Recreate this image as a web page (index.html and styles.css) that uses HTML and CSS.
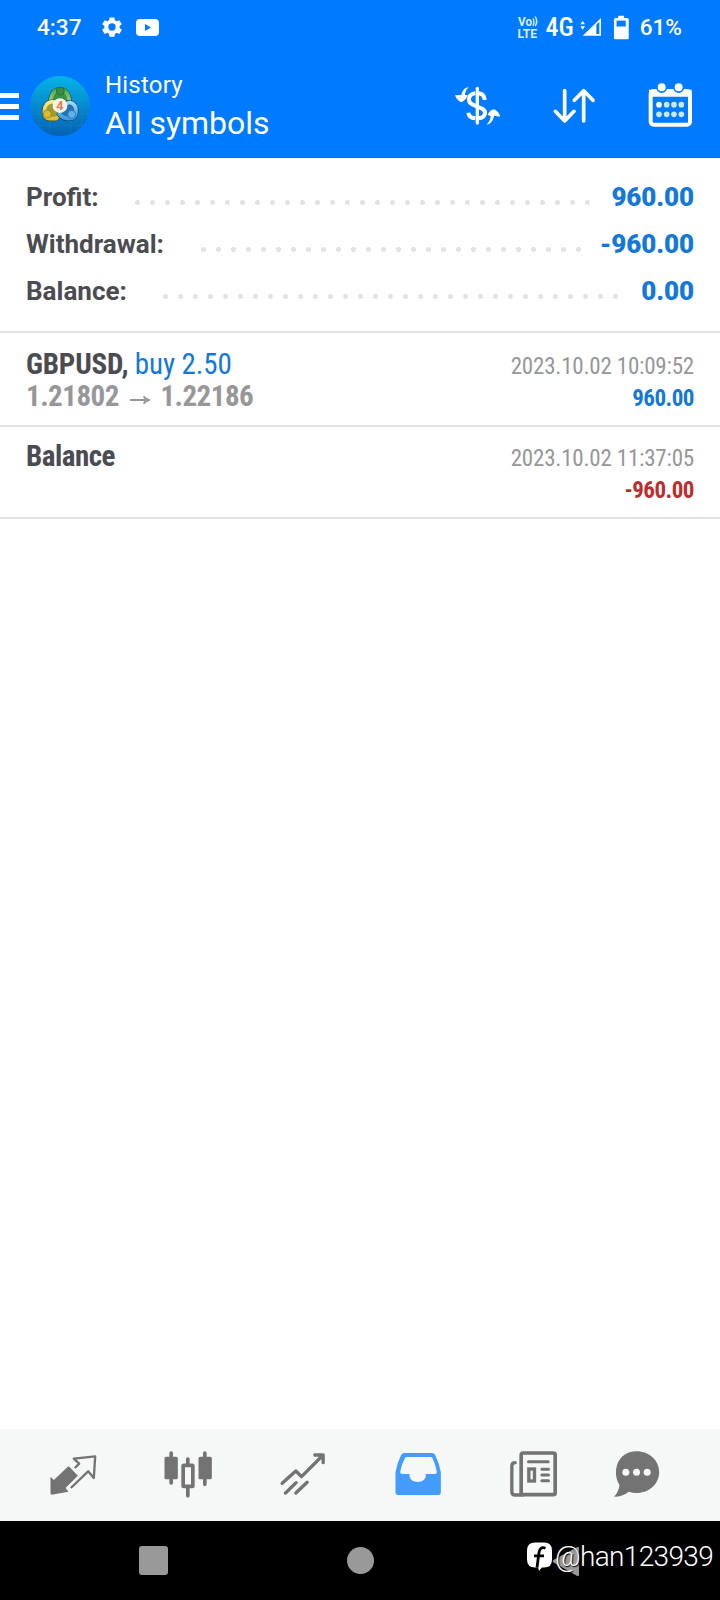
FILE: index.html
```
<!DOCTYPE html>
<html lang="en">
<head>
<meta charset="utf-8">
<title>History</title>
<link rel="stylesheet" href="styles.css">
</head>
<body>
<div class="screen">
  <header class="header">
    <div class="status">
      <span class="clock">4:37</span>
      <svg class="gear" viewBox="0 0 24 24"><path fill="#fff" fill-rule="evenodd" d="M9.3 1.5h5.4l.5 3 1.9 1.1 2.9-1.1 2.7 4.6-2.4 1.9v2l2.4 1.9-2.7 4.6-2.9-1.1-1.9 1.1-.5 3H9.3l-.5-3-1.9-1.1L4 19.500l-2.700-4.600 2.400-1.900v-2L1.300 9.100 4 4.500l2.900 1.100 1.900-1.100zM12 8a4 4 0 1 0 0 8 4 4 0 0 0 0-8z"/></svg>
      <svg class="tube" viewBox="0 0 23 17"><rect width="23" height="17" rx="4" fill="#fff"/><path d="M9 5v7l6-3.500z" fill="#007aff"/></svg>
      <span class="spacer"></span>
      <svg class="volte" viewBox="-2 -4 26 32"><text x="1" y="11" textLength="14" lengthAdjust="spacingAndGlyphs">Vo</text><text x="0.500" y="22.500" textLength="19.500" lengthAdjust="spacingAndGlyphs">LTE</text><path d="M16 3.500q2 3.500 0 7.500M18.200 1.500q3 5 0 9.500" fill="none" stroke="#d9efff" stroke-width="1.400"/></svg>
      <span class="net">4G</span>
      <svg class="signal" viewBox="660 50 66 60"><path d="M661 72l7-10 7 10zM661 78l7 10 7-10zM668 106l55-53v53z" fill="#fff"/><path d="M709 73v28h9V64z" fill="#007aff"/></svg>
      <svg class="battery" viewBox="760 40 50 76"><path d="M775 42h18v7h9q5 0 5 5v56q0 4-4 4h-37q-4 0-4-4V54q0-5 5-5h8z" fill="#fff"/><path d="M770 57h28v18h-28z" fill="#007aff"/></svg>
      <span class="percent">61%</span>
    </div>
    <div class="appbar">
      <div class="menu"><i></i><i></i><i></i></div>
      <svg class="logo" viewBox="90 226 180 180">
        <defs>
          <linearGradient id="sky" x1="0" y1="0" x2="0" y2="1"><stop offset="0" stop-color="#04b4e6"/><stop offset=".5" stop-color="#0689cf"/><stop offset="1" stop-color="#0561b0"/></linearGradient>
          <linearGradient id="green" x1="0" y1="0" x2="0" y2="1"><stop offset="0" stop-color="#4fa850"/><stop offset="1" stop-color="#b5e08c"/></linearGradient>
          <linearGradient id="gold" x1="0" y1="0" x2="0" y2="1"><stop offset="0" stop-color="#f3ea92"/><stop offset="1" stop-color="#d9bf3c"/></linearGradient>
          <linearGradient id="aqua" x1="0" y1="0" x2="0" y2="1"><stop offset="0" stop-color="#a3d9f5"/><stop offset="1" stop-color="#3f9be2"/></linearGradient>
        </defs>
        <circle cx="180" cy="316" r="90" fill="url(#sky)"/>
        <path d="M115 254v125M149 232v168M212 232v168M245 256v120M104 263h152M92 296h176M92 340h176M108 375h144" stroke="#48c3e5" stroke-opacity=".16" stroke-width="2"/>
        <g stroke-linejoin="round">
          <path d="M180 267c20 0 26 14 28 34l-4 14h-48l-4-14c2-20 8-34 28-34z" fill="#3c9149" stroke="#174f42" stroke-width="15"/>
          <path d="M180 267c20 0 26 14 28 34l-4 14h-48l-4-14c2-20 8-34 28-34z" fill="#3c9149" stroke="url(#green)" stroke-width="11"/>
          <path d="M160 303c-18 0-27 13-27 30 0 14 5 21 17 21h18l14-14-8-30z" fill="#a39a2c" stroke="#324e3c" stroke-width="15"/>
          <path d="M160 303c-18 0-27 13-27 30 0 14 5 21 17 21h18l14-14-8-30z" fill="#a39a2c" stroke="url(#gold)" stroke-width="11"/>
          <path d="M208 305c16 4 22 14 20 30-1 14-9 19-21 19-13 0-22-5-30-14l14-28z" fill="#2374b5" stroke="#103f6c" stroke-width="15"/>
          <path d="M208 305c16 4 22 14 20 30-1 14-9 19-21 19-13 0-22-5-30-14l14-28z" fill="#2374b5" stroke="url(#aqua)" stroke-width="11"/>
        </g>
        <circle cx="181" cy="271" r="12" fill="#358f3f" stroke="#1b6133" stroke-width="2"/>
        <circle cx="142" cy="340" r="12" fill="#dbbb32" stroke="#8b761b" stroke-width="2"/>
        <circle cx="215" cy="341" r="12" fill="#5db4ea" stroke="#1b6096" stroke-width="2"/>
        <circle cx="180" cy="315" r="22" fill="#f6f3ee"/>
        <text class="logo-num" x="180" y="328" text-anchor="middle">4</text>
      </svg>
      <div class="titles"><div class="sub">History</div><div class="main">All symbols</div></div>
      <svg class="act" viewBox="270 230 168 168" fill="none" stroke="#fff">
        <path d="M352 264v104" stroke-width="10" stroke-linecap="round"/>
        <path d="M374 299q-1-19-19-20M346 279c-22 2-25 25-9 33l31 14c14 9 6 28-13 28M346 354q-19-1-21-17" stroke-width="12"/>
        <path d="M326 261q-17 0-22 23l-19 1q4 14 19 21 14-6 19-21l-8-1q0-12 11-23zM380 373q18-3 22-27l18 3q-2-14-17-22-15 2-20 17l9 3q0 13-12 26z" fill="#fff" stroke="none"/>
      </svg>
      <svg class="act second" viewBox="562 230 168 168" fill="none" stroke="#fff" stroke-width="11" stroke-linecap="round" stroke-linejoin="round"><path d="M615 271v90M587 333l28 29 28-29M672 362v-90M644 300l28-29 28 29"/></svg>
      <svg class="act third" viewBox="850 230 168 168">
        <rect x="873" y="272" width="118" height="101" rx="9" fill="none" stroke="#fff" stroke-width="12"/>
        <path d="M868 268h128v21H868z" fill="#fff"/>
        <g fill="#fff" stroke="#007aff" stroke-width="5"><circle cx="906" cy="261" r="14.500"/><circle cx="957" cy="261" r="14.500"/></g>
        <g fill="#c9e7ff"><circle cx="898" cy="313" r="8.500" fill="#fff"/><circle cx="921" cy="313" r="8.500"/><circle cx="943" cy="313" r="8.500"/><circle cx="965" cy="313" r="8.500"/><circle cx="898" cy="342" r="8.500"/><circle cx="921" cy="342" r="8.500"/><circle cx="943" cy="342" r="8.500"/><circle cx="965" cy="342" r="8.500"/></g>
      </svg>
    </div>
  </header>

  <section class="summary">
    <div class="row"><span>Profit:</span><i class="dots profit"></i><b>960.00</b></div>
    <div class="row"><span>Withdrawal:</span><i class="dots withdrawal"></i><b>-960.00</b></div>
    <div class="row"><span>Balance:</span><i class="dots balance"></i><b>0.00</b></div>
  </section>

  <main class="deals">
    <article class="deal first">
      <div><div class="name">GBPUSD, <span class="buy">buy 2.50</span></div><div class="prices">1.21802<svg class="to" viewBox="0 0 20 12"><path d="M0 6h17M13.500 2.300Q15.500 5 19 6q-3.500 1-5.500 3.700" fill="none" stroke="#97979a" stroke-width="2"/></svg>1.22186</div></div>
      <div class="right"><div class="date">2023.10.02 10:09:52</div><div class="sum">960.00</div></div>
    </article>
    <article class="deal">
      <div class="name plain">Balance</div>
      <div class="right"><div class="date">2023.10.02 11:37:05</div><div class="sum loss">-960.00</div></div>
    </article>
  </main>

  <nav class="tabs">
    <svg viewBox="133.500 81 168 168" fill="#737373"><path d="M150 170l10 10 42-40q3-1 6 2l24 25-37 37 9 11-51 9q-3 0-3-4z"/><path d="M223 144l13-13-16-15 64-7-4 65-17-20-52 50" fill="none" stroke="#737373" stroke-width="7" stroke-linejoin="round"/></svg>
    <svg viewBox="478.500 81 168 168" fill="#737373"><rect x="492" y="110" width="40" height="68" rx="5"/><rect x="594" y="110" width="40" height="68" rx="5"/><path d="M512 99v90M613 99v94M562 117v16M562 203v24" stroke="#737373" stroke-width="11" stroke-linecap="round"/><rect x="548" y="136" width="29" height="63" rx="2" fill="none" stroke="#737373" stroke-width="11"/></svg>
    <svg viewBox="823.500 81 168 168" fill="none" stroke="#737373" stroke-width="10" stroke-linecap="round" stroke-linejoin="round"><path d="M845 190l41-37 17 17 65-65M943 105h25v23M855 219l32-31M886 219l34-32"/></svg>
    <svg viewBox="88.500 81 168 168"><path fill="#439cff" fill-rule="evenodd" d="M132 99h82q7 0 10 6 13 27 17 52v60q0 8-8 8H113q-8 0-8-8v-60q4-27 17-52 3-6 10-6zM139 111q-4 0-6 4-10 19-14 41 0 6 6 6h22v7a25 21 0 0 0 49 0v-7h27q6 0 6-6-4-22-13-41-2-4-6-4z"/></svg>
    <svg viewBox="433.500 81 168 168" fill="none" stroke="#737373" stroke-linecap="round"><rect x="482" y="99" width="102" height="125" rx="6" stroke-width="11"/><path d="M464 128q-10 0-10 10v77q0 10 10 10h22" stroke-width="10"/><path d="M504 125h59M544 148h20M544 165h20M544 182h20" stroke-width="9"/><rect x="505" y="147" width="17" height="36" stroke-width="10"/></svg>
    <svg viewBox="742.500 81 168 168"><path fill="#737373" d="M828 94c38 0 68 27 68 62 0 36-30 63-68 63q-12 0-23-4-19 15-44 15 14-15 16-35c-24-38-7-101 51-101z"/><g fill="#f6f7f7"><circle cx="796" cy="157" r="10.500"/><circle cx="828" cy="157" r="10.500"/><circle cx="860" cy="157" r="10.500"/></g></svg>
  </nav>

  <footer class="system">
    <i class="recent"></i><i class="home"></i>
    <svg class="back" viewBox="576 376 84 92"><path d="M581 417l70-38q6-3 6 4v78q0 8-7 4l-69-40q-6-4 0-8z" fill="#999"/></svg>
    <div class="mark">
      <svg class="mark-logo" viewBox="0 0 26 29"><path d="M8 .5h9q8 0 8 8v9q0 8-8 8h-2l-3 3.200-1-3.200H8q-8 0-8-8v-9q0-8 8-8z" fill="#fff"/><path d="M18.500 6.200c-4-1.500-6 .5-6.500 4.300L10 25.500M7 13.800h10" fill="none" stroke="#000" stroke-width="2.800"/></svg>
      <span>@han123939</span>
    </div>
  </footer>
</div>
</body>
</html>
```
FILE: styles.css
```
* { box-sizing: border-box; }
body { margin: 0; background: #fff; font-family: Roboto, "Liberation Sans", sans-serif; }
svg { display: block; flex: none; }
.screen { width: 720px; height: 1600px; display: flex; flex-direction: column; background: #fff; overflow: hidden; white-space: nowrap; }

.header { height: 158px; background: #007aff; border-bottom: 1px solid #0d6fcc; color: #fff; }
.status { height: 54px; padding: 0 38px 0 37px; display: flex; align-items: center; font-weight: 500; }
.clock, .percent { font-size: 22.600px; }
.gear { width: 22px; height: 22px; margin-left: 20px; }
.tube { width: 23px; height: 17px; margin-left: 13px; }
.spacer { flex: 1; }
.volte { width: 26px; height: 32px; font: 700 13px Roboto, sans-serif; fill: #d9efff; }
.net { margin-left: 4px; font: 500 26px/54px "Roboto Condensed", Roboto, sans-serif; }
.signal { width: 22px; height: 20px; margin-left: 6px; }
.battery { width: 17px; height: 25px; margin-left: 11px; }
.percent { margin-left: 10px; }

.appbar { height: 103px; padding-right: 21px; display: flex; align-items: flex-start; }
.menu { width: 19px; padding-top: 39px; display: grid; gap: 6px; }
.menu i { height: 5px; background: #fff; }
.logo { width: 60px; height: 60px; margin: 21.500px 0 0 11px; }
.logo-num { font: 700 38px Roboto, sans-serif; fill: #ee7d36; }
.titles { flex: 1; margin-left: 15px; padding-top: 15px; }
.sub { font-size: 24px; line-height: 32px; letter-spacing: .2px; }
.main { font-size: 32px; line-height: 44px; }
.act { width: 56px; height: 56px; margin-top: 23px; }
.second { margin-left: 41px; }
.third { margin-left: 40px; }

.summary { height: 175px; padding: 16px 26px; border-bottom: 2px solid #e4e4e5; }
.row { height: 47px; display: flex; font-size: 26px; line-height: 47px; font-weight: 700; color: #4b4b52; }
.row b { margin-left: auto; letter-spacing: -.1px; color: #1478d8; }
.dots { height: 5px; margin-top: 26px; background: radial-gradient(circle at 7.500px 2.500px, #e4e4e5 2.200px, transparent 2.800px) 0 0 / 15px 5px repeat-x; }
.profit { width: 465px; margin-left: 31.500px; }
.withdrawal { width: 390px; margin-left: 32px; }
.balance { width: 465px; margin-left: 31px; }

.deal { height: 92px; padding: 13px 26px 0 26px; display: flex; justify-content: space-between; border-bottom: 2px solid #e4e4e5; font-family: "Roboto Condensed", Roboto, sans-serif; line-height: 32px; }
.first { height: 94px; padding-top: 15px; }
.name { font-size: 29px; font-weight: 700; letter-spacing: -.2px; color: #4b4b52; }
.plain { letter-spacing: -.5px; }
.buy { font-weight: 400; letter-spacing: -.1px; color: #1478d8; }
.prices { display: flex; font-size: 29px; font-weight: 700; letter-spacing: -.5px; color: #97979a; }
.to { width: 20px; height: 12px; margin: 14px 10.500px 0 11px; }
.right { padding-top: 3px; text-align: right; }
.date { font-size: 23px; letter-spacing: -.2px; color: #97979a; }
.sum { font-size: 23px; font-weight: 700; letter-spacing: -.5px; color: #1478d8; }
.loss { color: #c02c2c; }

.tabs { height: 92px; margin-top: auto; padding-left: 15px; background: #f6f7f7; display: grid; grid-template-columns: repeat(5, 115px) 91px; align-items: center; justify-items: center; }
.tabs svg { width: 56px; height: 56px; }

.system { position: relative; height: 79px; padding: 25px 0 0 139px; display: flex; background: #000; }
.recent { width: 29px; height: 29px; border-radius: 3px; background: #999; }
.home { width: 27px; height: 27px; margin: 1px 0 0 179px; border-radius: 50%; background: #999; }
.back { width: 28px; height: 31px; margin-left: 178px; }
.mark { position: absolute; left: 527px; top: 17px; display: flex; align-items: center; color: #fff; font-size: 28px; font-weight: 300; line-height: 37px; letter-spacing: -.65px; text-shadow: 1px 1px 1px #000; }
.mark-logo { width: 26px; height: 29px; margin-right: 2px; }
```
